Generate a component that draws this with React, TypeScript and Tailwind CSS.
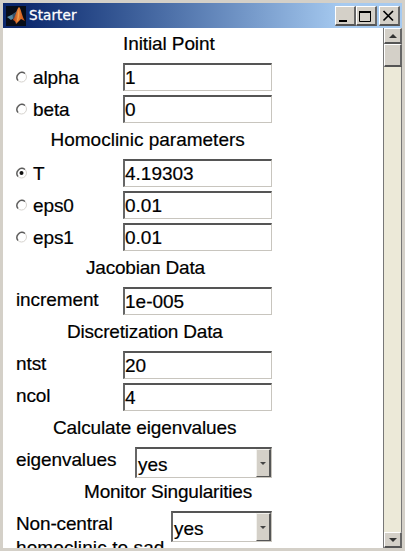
import React from "react";

const FONT = "font-['Liberation_Sans',Arial,sans-serif]";

function Heading({ text, indent, spacing = "" }: { text: string; indent: string; spacing?: string }) {
  return (
    <div className="h-8 shrink-0 pt-[5px]">
      <span className={`block leading-[22px] ${indent} ${spacing}`}>{text}</span>
    </div>
  );
}

function Radio({ checked }: { checked: boolean }) {
  return (
    <svg viewBox="0 0 12 12" className="h-3 w-3 shrink-0">
      <circle cx="5.5" cy="6" r="5" fill="#fff" stroke="#d6d3ce" />
      <path d="M2 9.5A5 5 0 0 1 9 2.5" fill="none" stroke="#5c5c5c" strokeWidth="1.4" />
      {checked && <circle cx="5.5" cy="6" r="2" fill="#111" />}
    </svg>
  );
}

function Field({ value }: { value: string }) {
  return (
    <div className="mt-[3px] h-7 w-[149px] border-t-2 border-r border-b border-l-2 border-t-[#555] border-r-[#c8c5be] border-b-[#c8c5be] border-l-[#666] pt-[2px] leading-[22px]">
      {value}
    </div>
  );
}

function Popup({ value, width }: { value: string; width: string }) {
  return (
    <div className={`mt-[3px] flex h-[31px] shrink-0 border-t-2 border-r border-b border-l-2 border-t-[#555] border-r-[#c8c5be] border-b-[#c8c5be] border-l-[#666] ${width}`}>
      <span className="flex-1 pt-[5px] pl-px leading-[22px]">{value}</span>
      <div className="flex w-[15px] items-center justify-center border-t border-r-2 border-b border-l border-t-[#f3f2ee] border-r-[#555] border-b-[#555] border-l-[#f3f2ee] bg-[#d4d0c8]">
        <svg viewBox="0 0 6 3" className="h-[3px] w-[6px]">
          <path d="M0 0H6L3 3Z" fill="#444" />
        </svg>
      </div>
    </div>
  );
}

function ParamRow({ label, value, checked }: { label: string; value: string; checked?: boolean }) {
  const radio = checked !== undefined;
  return (
    <div className="flex h-8 shrink-0">
      <div className={`flex w-[107px] ${radio ? "pt-[7px]" : "pt-[5px]"}`}>
        {radio && (
          <div className="mt-1 mr-[5px] w-3">
            <Radio checked={checked} />
          </div>
        )}
        <span className="leading-[22px] tracking-[-0.1px]">{label}</span>
      </div>
      <Field value={value} />
    </div>
  );
}

function WindowButton({ kind, className = "" }: { kind: "min" | "max" | "close"; className?: string }) {
  return (
    <div className={`h-5 w-[21px] border-t border-r-2 border-b-2 border-l border-t-white border-r-[#666] border-b-[#555] border-l-white bg-[#d4d0c8] ${className}`}>
      <svg viewBox="0 0 18 17" className="h-[17px] w-[18px]" fill="none" stroke="#000">
        {kind === "min" && <path d="M3 14H11" strokeWidth="2" />}
        {kind === "max" && (
          <>
            <path d="M2 5H14" strokeWidth="2" />
            <path d="M2.5 5V14.5H13.5V5" />
          </>
        )}
        {kind === "close" && <path d="M3.5 4L13 13.5M13 4L3.5 13.5" strokeWidth="1.7" />}
      </svg>
    </div>
  );
}

function MatlabIcon() {
  return (
    <svg viewBox="0 0 20 20" className="h-5 w-5 shrink-0">
      <defs>
        <linearGradient id="flame" x1="0" x2="1">
          <stop offset="0" stopColor="#a83712" />
          <stop offset=".45" stopColor="#e88438" />
          <stop offset="1" stopColor="#c94a12" />
        </linearGradient>
      </defs>
      <rect width="20" height="20" fill="#080d18" />
      <path d="M1 11L6.5 8.5L10 6L8 12L5 14Z" fill="#5488a4" />
      <path d="M6.5 8.5L10 6L12 2L10 11L7 13Z" fill="#365067" />
      <path d="M13 1C15 2 16 11 19 15L15 13L10 18C9.5 15 8 14 6.5 14C9.5 12 10.5 3 13 1Z" fill="url(#flame)" />
      <path d="M13 3C13.5 7 13.5 11 12 14L10.5 16C12 12 11.5 7 13 3Z" fill="#f0a050" />
    </svg>
  );
}

function ScrollButton({ down = false }: { down?: boolean }) {
  return (
    <div className="flex h-4 shrink-0 items-center justify-center border-t border-r-2 border-b-2 border-l border-t-white border-r-[#666] border-b-[#555] border-l-white bg-[#d4d0c8]">
      <svg viewBox="0 0 8 4" className="h-1 w-2">
        <path d={down ? "M0 0H8L4 4Z" : "M0 4H8L4 0Z"} fill="#333" />
      </svg>
    </div>
  );
}

export default function App() {
  return (
    <div className={`flex h-[551px] w-[405px] flex-col overflow-hidden border-[3px] border-[#d4d0c8] bg-white text-[19px] text-black [-webkit-text-stroke:0.2px_black] ${FONT}`}>
      <header className="flex h-[25px] shrink-0 items-center bg-linear-to-r from-[#0c286d] from-5% to-[#a6caf0] to-85% pl-[3px]">
        <MatlabIcon />
        <span className="ml-[3px] flex-1 font-['DejaVu_Sans',sans-serif] text-[13.5px] tracking-[0.1px] text-white [-webkit-text-stroke:0.3px_white]">
          Starter
        </span>
        <WindowButton kind="min" />
        <WindowButton kind="max" />
        <WindowButton kind="close" className="mr-[2px] ml-[2px]" />
      </header>
      <div className="flex min-h-0 flex-1">
        <main className="flex min-w-0 flex-1 flex-col overflow-hidden pl-[13px] whitespace-nowrap">
          <Heading text="Initial Point" indent="ml-[107px]" spacing="tracking-[-0.1px]" />
          <ParamRow label="alpha" value="1" checked={false} />
          <ParamRow label="beta" value="0" checked={false} />
          <Heading text="Homoclinic parameters" indent="ml-[34.5px]" />
          <ParamRow label="T" value="4.19303" checked={true} />
          <ParamRow label="eps0" value="0.01" checked={false} />
          <ParamRow label="eps1" value="0.01" checked={false} />
          <Heading text="Jacobian Data" indent="ml-[70px]" spacing="tracking-[-0.2px]" />
          <ParamRow label="increment" value="1e-005" />
          <Heading text="Discretization Data" indent="ml-[51px]" spacing="tracking-[-0.2px]" />
          <ParamRow label="ntst" value="20" />
          <ParamRow label="ncol" value="4" />
          <Heading text="Calculate eigenvalues" indent="ml-[37px]" spacing="tracking-[-0.12px]" />
          <div className="flex h-8 shrink-0">
            <span className="w-[119px] pt-[5px] leading-[22px] tracking-[-0.1px]">eigenvalues</span>
            <Popup value="yes" width="w-[137px]" />
          </div>
          <Heading text="Monitor Singularities" indent="ml-[68px]" spacing="tracking-[-0.2px]" />
          <div className="flex shrink-0">
            <div className="w-[155px] pt-[4px] leading-[24px]">
              <span className="tracking-[-0.15px]">Non-central</span>
              <br />
              <span className="tracking-[0.1px]">homoclinic to sad</span>
            </div>
            <Popup value="yes" width="w-[101px]" />
          </div>
        </main>
        <aside className="flex w-[19px] flex-col border-l border-[#777] bg-[#ece9d8]">
          <ScrollButton />
          <div className="h-[23px] border-t border-r-2 border-b-2 border-l border-t-white border-r-[#666] border-b-[#555] border-l-white bg-[#d4d0c8]" />
          <div className="flex-1 border-r border-[#777]" />
          <ScrollButton down />
        </aside>
      </div>
    </div>
  );
}
